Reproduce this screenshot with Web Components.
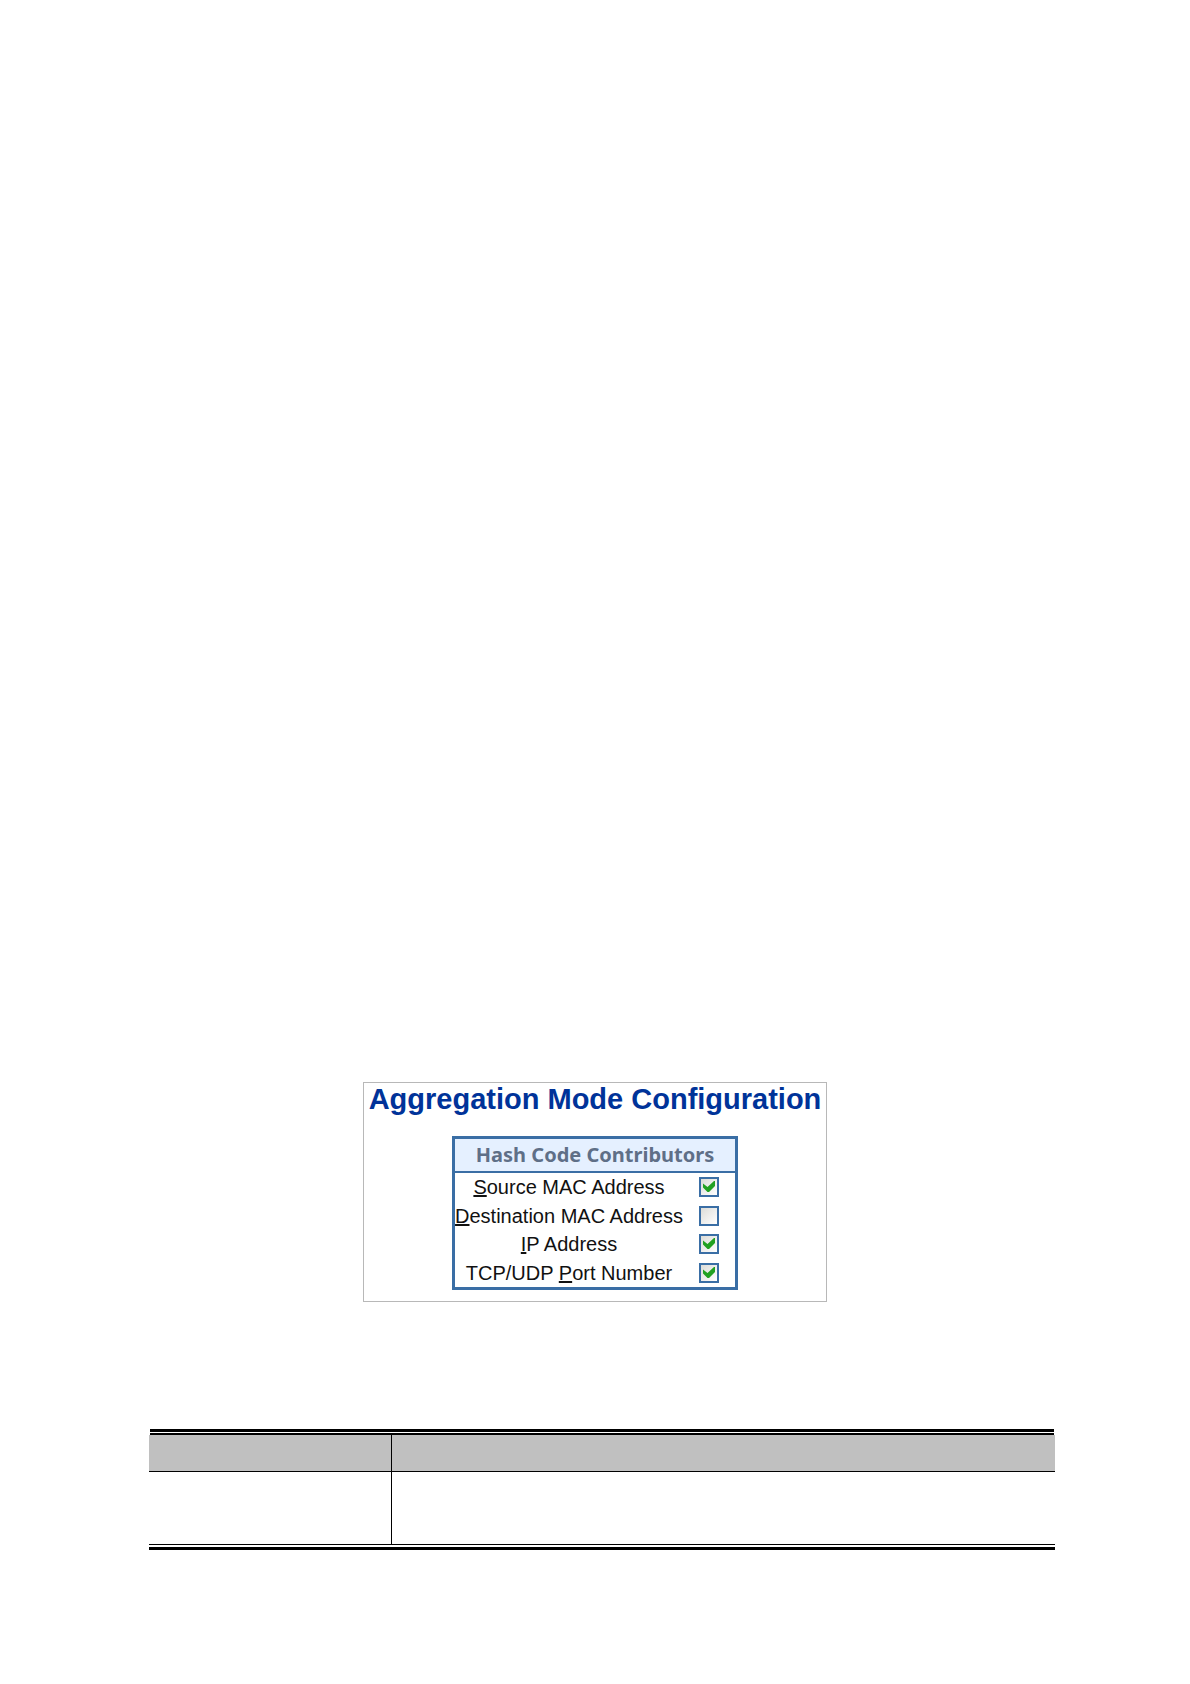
<!DOCTYPE html>
<html lang="en">
<head>
<meta charset="utf-8">
<title>Aggregation Mode Configuration</title>
<style>
    body {
        margin: 0;
        background: #fff;
        color: #111;
        font-family: "Liberation Sans", Arial, sans-serif;
    }

    main {
        display: flex;
        flex-direction: column;
        gap: 127px;
        padding: 1082px 0 134px;
    }
</style>
</head>
<body>
<main>
    <config-panel>
        <span slot="title">Aggregation Mode Configuration</span>
        <option-group>
            <span slot="heading">Hash Code Contributors</span>
            <hash-option checked key="s"><u>S</u>ource MAC Address</hash-option>
            <hash-option key="d"><u>D</u>estination MAC Address</hash-option>
            <hash-option checked key="i"><u>I</u>P Address</hash-option>
            <hash-option checked key="p">TCP/UDP <u>P</u>ort Number</hash-option>
        </option-group>
    </config-panel>
    <object-table></object-table>
</main>

<script>
function makeTemplate(html) {
    const template = document.createElement("template");
    template.innerHTML = html;
    return template;
}

const panelTemplate = makeTemplate(`
    <style>
        :host {
            display: block;
            align-self: center;
            box-sizing: border-box;
            padding: 0 5px 11px;
            border: 1px solid #b8b8b8;
        }

        h1 {
            margin: 0 0 21px;
            color: #003399;
            font-size: 29px;
            line-height: 32px;
            text-align: center;
        }
    </style>
    <h1><slot name="title"></slot></h1>
    <slot></slot>
`);

const groupTemplate = makeTemplate(`
    <style>
        :host {
            display: block;
            width: fit-content;
            margin: 0 auto;
            border: 3px solid #3a6ea5;
        }

        h2 {
            margin: 0;
            border-bottom: 2px solid #3a6ea5;
            background: #e5f0ff;
            color: #5f6f87;
            font: bold 20px/32px "Noto Sans", Verdana, sans-serif;
            text-align: center;
        }

        .rows {
            display: grid;
            grid-auto-rows: 1fr;
            min-height: 114px;
        }
    </style>
    <h2><slot name="heading"></slot></h2>
    <div class="rows"><slot></slot></div>
`);

const optionTemplate = makeTemplate(`
    <style>
        :host {
            display: grid;
            grid-template-columns: 1fr 52px;
            align-items: center;
            justify-items: center;
            font-size: 20px;
            line-height: 28px;
        }

        label {
            white-space: nowrap;
        }

        .box {
            display: grid;
        }

        input, svg {
            grid-area: 1 / 1;
            width: 20px;
            height: 20px;
        }

        input {
            appearance: none;
            margin: 0;
            border: 2px solid #3a6ea5;
            background: linear-gradient(135deg, #dcdcd8, #fff);
        }

        svg {
            display: none;
            fill: #21a121;
            pointer-events: none;
        }

        input:checked + svg {
            display: block;
        }
    </style>
    <label for="box"><slot></slot></label>
    <span class="box">
        <input type="checkbox" id="box">
        <svg viewBox="0 0 20 20" aria-hidden="true"><path d="M4 6.500 L8.500 10 L15 4 H16 V9 L10 15 H8.500 L4 10.500 Z"/></svg>
    </span>
`);

const tableTemplate = makeTemplate(`
    <style>
        :host {
            display: block;
            margin: 0 135px 0 149px;
        }

        .rule {
            border: 0 solid #000;
        }

        .top {
            height: 1px;
            margin: 0 1px;
            border-width: 3px 0 2px;
        }

        .bottom {
            height: 2px;
            border-width: 1px 0 3px;
        }

        table {
            width: 100%;
            border-collapse: separate;
            border-spacing: 0;
            table-layout: fixed;
        }

        th, td {
            padding: 0;
        }

        th {
            height: 36px;
            border-bottom: 1px solid #000;
            background: #c0c0c0;
        }

        td {
            height: 72px;
        }

        .name {
            width: 242px;
            border-right: 1px solid #000;
        }
    </style>
    <div class="rule top"></div>
    <table>
        <thead><tr><th class="name"></th><th></th></tr></thead>
        <tbody><tr><td class="name"></td><td></td></tr></tbody>
    </table>
    <div class="rule bottom"></div>
`);

class ConfigPanel extends HTMLElement {
    constructor() {
        super();
        this.attachShadow({mode: "open"}).append(panelTemplate.content.cloneNode(true));
    }
}

class OptionGroup extends HTMLElement {
    constructor() {
        super();
        this.attachShadow({mode: "open"}).append(groupTemplate.content.cloneNode(true));
    }
}

class HashOption extends HTMLElement {
    constructor() {
        super();
        this.attachShadow({mode: "open"}).append(optionTemplate.content.cloneNode(true));
    }

    connectedCallback() {
        const input = this.shadowRoot.querySelector("input");
        input.checked = this.hasAttribute("checked");
        input.accessKey = this.getAttribute("key");
    }
}

class ObjectTable extends HTMLElement {
    constructor() {
        super();
        this.attachShadow({mode: "open"}).append(tableTemplate.content.cloneNode(true));
    }
}

customElements.define("config-panel", ConfigPanel);
customElements.define("option-group", OptionGroup);
customElements.define("hash-option", HashOption);
customElements.define("object-table", ObjectTable);
</script>
</body>
</html>
